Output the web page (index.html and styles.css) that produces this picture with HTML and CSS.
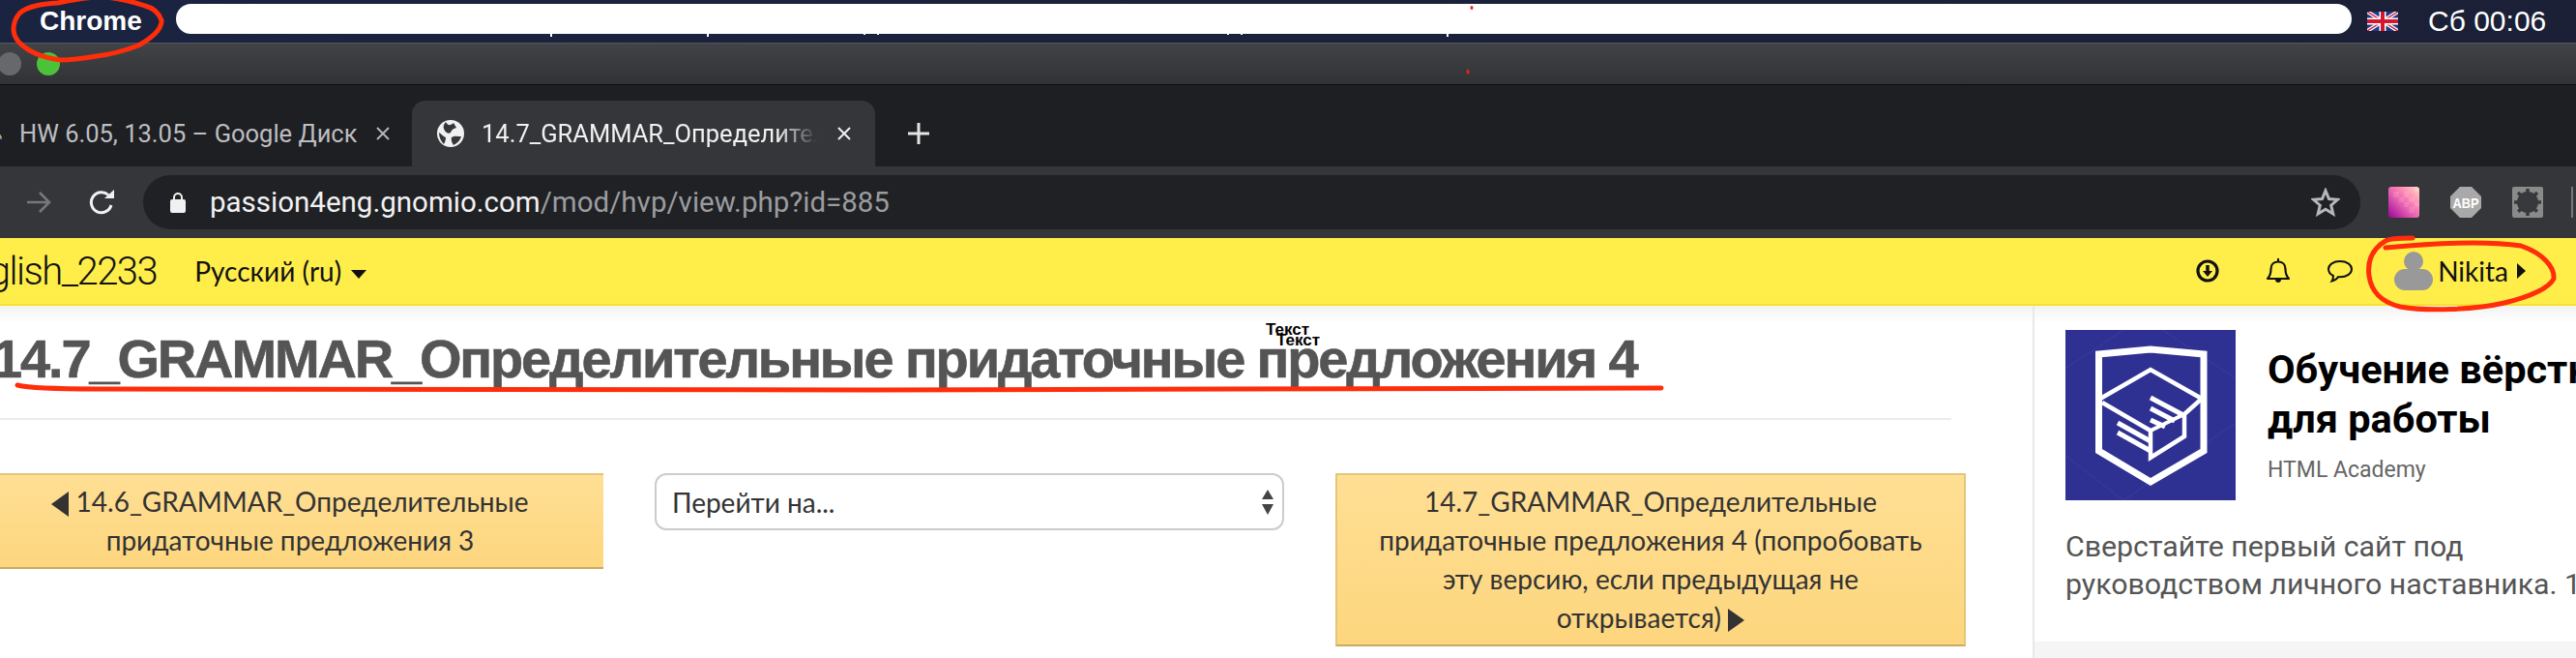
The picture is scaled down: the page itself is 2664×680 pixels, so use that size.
FILE: index.html
```html
<!DOCTYPE html>
<html lang="ru">
<head>
  <meta charset="UTF-8">
  <title>14.7_GRAMMAR_Определительные придаточные предложения 4</title>
  <link rel="stylesheet" href="styles.css">
</head>
<body>
  <div class="menubar">
    <span class="app-name">Chrome</span>
    <div class="menu-blank"></div>
    <svg class="flag" viewBox="0 0 32 20">
      <rect width="32" height="20" fill="#1f3a8c"/>
      <path d="M0 0L32 20M32 0L0 20" stroke="#fff" stroke-width="4"/>
      <path d="M0 0L32 20M32 0L0 20" stroke="#d3172e" stroke-width="1.4"/>
      <path d="M16 0V20M0 10H32" stroke="#fff" stroke-width="7"/>
      <path d="M16 0V20M0 10H32" stroke="#d3172e" stroke-width="4"/>
    </svg>
    <span class="clock">Сб 00:06</span>
  </div>

  <div class="titlebar">
    <span class="dot dot-grey"></span>
    <span class="dot dot-green"></span>
  </div>

  <div class="tabstrip">
    <div class="tab">
      <svg class="drive-icon" viewBox="0 0 12 12"><path d="M4 1L9 10H0z" fill="#f4b400"/><path d="M0 10H9V12H0z" fill="#4285f4"/></svg>
      <span class="tab-title">HW 6.05, 13.05 – Google Диск</span>
      <svg class="tab-close" viewBox="0 0 16 16"><path d="M2 2L14 14M14 2L2 14" stroke="#b4b5b8" stroke-width="2"/></svg>
    </div>
    <div class="tab tab-active">
      <svg class="globe" viewBox="0 0 28 28">
        <circle cx="14" cy="14" r="14" fill="#f1f1f2"/>
        <path d="M9 2C11 6 14 6 17 3L20 8C17 9 15 10 14 13C11 15 8 12 7 9C6 7 7 4 9 2z" fill="#35363a"/>
        <path d="M15 18C18 16 21 17 25 17C24 21 21 24 17 26C16 24 14 21 15 18z" fill="#35363a"/>
        <path d="M2 13C4 14 6 17 9 18C9 21 8 23 7 25C4 22 2 18 2 13z" fill="#35363a"/>
      </svg>
      <span class="tab-title tab-title-fade">14.7_GRAMMAR_Определительные придаточные</span>
      <svg class="tab-close" viewBox="0 0 16 16"><path d="M2 2L14 14M14 2L2 14" stroke="#f1f1f2" stroke-width="2"/></svg>
    </div>
    <svg class="new-tab" viewBox="0 0 24 24"><path d="M12 1V23M1 12H23" stroke="#e4e4e6" stroke-width="3"/></svg>
  </div>

  <div class="toolbar">
    <svg class="nav-arrow" viewBox="0 0 26 26"><path d="M1 13H24M14 3L24 13L14 23" fill="none" stroke="#77787b" stroke-width="2.6"/></svg>
    <svg class="reload" viewBox="0 0 28 28"><path d="M23 17A10.500 10.500 0 1 1 20 6.500" fill="none" stroke="#f1f1f2" stroke-width="3"/><path d="M16 10H26V1z" fill="#f1f1f2"/></svg>
    <div class="urlbar">
      <svg class="lock" viewBox="0 0 16 22"><path d="M4 9V6a4 4 0 0 1 8 0V9" fill="none" stroke="#f1f1f2" stroke-width="2"/><rect y="8" width="16" height="14" rx="2" fill="#f1f1f2"/></svg>
      <span class="url"><span class="url-host">passion4eng.gnomio.com</span>/mod/hvp/view.php?id=885</span>
      <svg class="star" viewBox="0 0 30 30"><path d="M15 3L18.500 11.500L27.500 12.300L20.700 18.200L22.800 27L15 22.300L7.200 27L9.300 18.200L2.500 12.300L11.500 11.500z" fill="none" stroke="#b6b7ba" stroke-width="3"/></svg>
    </div>
    <svg class="ext" viewBox="0 0 6 6" shape-rendering="crispEdges">
      <defs><linearGradient id="pink" x1="0" y1="1" x2="1" y2="0"><stop offset="0.05" stop-color="#a1109a"/><stop offset="0.4" stop-color="#e05ab0"/><stop offset="0.65" stop-color="#ff86b4"/><stop offset="1" stop-color="#ffd9c4"/></linearGradient></defs>
      <rect width="6" height="6" rx="0.4" fill="url(#pink)"/>
      <path d="M1 1h1v1h-1zM3 1h1v1h-1zM5 0h1v1h-1zM2 2h1v1h-1zM4 2h1v1h-1zM3 3h1v1h-1zM5 3h1v1h-1zM4 4h1v1h-1z" fill="#fff" fill-opacity="0.12"/>
    </svg>
    <svg class="ext" viewBox="0 0 32 32">
      <path d="M10 0H22L32 10V22L22 32H10L0 22V10z" fill="#a9a9a9"/>
      <text class="abp-text" x="16" y="21.500" text-anchor="middle" textLength="27" lengthAdjust="spacingAndGlyphs">ABP</text>
    </svg>
    <svg class="ext" viewBox="0 0 32 32">
      <rect width="32" height="32" rx="2" fill="#8a8a8b"/>
      <circle cx="16" cy="16" r="11" fill="#38393c"/>
      <path d="M16 2V30M2 16H30M6 6L26 26M26 6L6 26" stroke="#38393c" stroke-width="3.500" stroke-dasharray="4 20 4 20"/>
    </svg>
    <span class="toolbar-sep"></span>
  </div>

  <div class="sitebar">
    <span class="site-name">English_2233</span>
    <span class="lang">Русский (ru) <i class="caret-down"></i></span>
    <div class="sitebar-right">
      <svg class="site-icon download" viewBox="0 0 24 24"><circle cx="12" cy="12" r="10" fill="none" stroke="#111" stroke-width="3.200"/><path d="M12 6V14" stroke="#111" stroke-width="3.500"/><path d="M7 12H17L12 18z" fill="#111"/></svg>
      <svg class="site-icon bell" viewBox="0 0 26 28"><path d="M2 22C5 19 5.500 16 5.500 12C5.500 7 9 4.500 13 4.500C17 4.500 20.500 7 20.500 12C20.500 16 21 19 24 22z" fill="none" stroke="#111" stroke-width="2.200" stroke-linejoin="round"/><path d="M13 1V4" stroke="#111" stroke-width="2"/><path d="M10 23C10 27 16 27 16 23z" fill="#111"/></svg>
      <svg class="site-icon chat" viewBox="0 0 28 26"><path d="M14 3C7 3 2 6.500 2 11C2 14 4 16.500 7 18C7 20 6.500 22 5.500 23.500C8 23 10.500 21.500 12 19.200C12.700 19.300 13.300 19.300 14 19.300C21 19.300 26 15.500 26 11C26 6.500 21 3 14 3z" fill="none" stroke="#111" stroke-width="2"/></svg>
      <svg class="avatar" viewBox="0 0 40 40"><circle cx="20" cy="10" r="10" fill="#999"/><rect y="18" width="40" height="22" rx="11" fill="#999"/></svg>
      <span class="user-name">Nikita</span>
      <i class="caret-right"></i>
    </div>
  </div>

  <div class="page">
    <div class="main">
      <h1 class="page-title">14.7_GRAMMAR_Определительные придаточные предложения 4</h1>
      <div class="main-rule"></div>
      <div class="activity-nav">
        <a class="nav-btn nav-prev"><i class="arrow-left"></i> 14.6_GRAMMAR_Определительные придаточные предложения 3</a>
        <div class="jump">
          <span>Перейти на...</span>
          <svg class="jump-arrows" viewBox="0 0 14 28"><path d="M7 1L13 11H1zM1 16H13L7 27z" fill="#444"/></svg>
        </div>
        <a class="nav-btn nav-next">14.7_GRAMMAR_Определительные придаточные предложения 4 (попробовать эту версию, если предыдущая не открывается) <i class="arrow-right"></i></a>
      </div>
    </div>

    <aside class="side">
      <div class="ad">
        <div class="ad-head">
          <svg class="ad-logo" viewBox="0 0 176 176">
            <rect width="176" height="176" fill="#2e3192"/>
            <path d="M0 40L60 0M60 176L176 96M0 130L60 176M100 0L176 50" stroke="#3a3d9e" stroke-width="1" fill="none"/>
            <path d="M34.500 25L88 20L143 25V125L88 157L34.500 125z" fill="none" stroke="#fff" stroke-width="7"/>
            <path d="M36 71L88 41L141 71L123 87V110L88 132V104L38 75" fill="none" stroke="#fff" stroke-width="4.500"/>
            <path d="M88 104L123 87" fill="none" stroke="#fff" stroke-width="4"/>
            <path d="M88 70L122 88M88 81L113 94M88 93L103 100M54 96L88 115M54 106L88 125" fill="none" stroke="#fff" stroke-width="5"/>
          </svg>
          <div class="ad-text">
            <div class="ad-title">Обучение вёрстки<br>для работы</div>
            <div class="ad-org">HTML Academy</div>
          </div>
        </div>
        <p class="ad-desc">Сверстайте первый сайт под<br>руководством личного наставника. 1</p>
      </div>
      <div class="ad-foot"></div>
    </aside>
  </div>

  <!-- пометки поверх скриншота -->
  <span class="stray-text stray-one">Текст</span>
  <span class="stray-text stray-two">Текст</span>
  <svg class="marks" viewBox="0 0 2664 680">
    <path class="mark-tick" d="M570 34V38M732 34V38M894 34V36M908 34V36M1270 34V36M1284 34V36M1497 34V38"/>
    <path class="mark-line" d="M60 3C44 4 28 6 20 14C12 24 12 36 20 44C30 54 46 60 63 62C76 62 88 60 100 58C116 56 130 52 143 47C156 40 168 30 167 21C164 12 158 8 150 6C132 0 118 -3 104 -3C88 -3 74 0 60 3"/>
    <path class="mark-line" d="M18 398C30 401 60 402 100 402L900 403L1718 401"/>
    <path class="mark-line" d="M2495 246C2480 246 2470 247 2467 249C2452 258 2448 270 2450 285C2452 300 2462 312 2482 317C2510 322 2560 320 2590 313C2615 307 2636 298 2641 288C2642 276 2630 262 2607 254C2580 250 2530 250 2467 256"/>
    <ellipse class="mark-dot" cx="1522" cy="8" rx="1.500" ry="2"/>
    <ellipse class="mark-dot" cx="1518" cy="74" rx="1.500" ry="2.500"/>
  </svg>
</body>
</html>
```

FILE: styles.css
```css
html, body { margin: 0; padding: 0; }
body { position: relative; width: 2664px; height: 680px; overflow: hidden; background: #fff; font-family: 'Roboto', sans-serif; }

.menubar { height: 44px; display: flex; align-items: center; background: linear-gradient(to right, #1a2340, #1b2036); border-bottom: 1px solid #55565a; }
.app-name { width: 182px; flex: none; padding-left: 41px; box-sizing: border-box; color: #fff; font: bold 28px 'Liberation Sans', sans-serif; }
.menu-blank { width: 2250px; height: 31px; flex: none; background: #fff; border-radius: 16px; margin-top: -6px; }
.flag { width: 32px; height: 20px; flex: none; margin-left: 16px; }
.clock { margin-left: 31px; color: #fff; font: 30px 'Liberation Sans', sans-serif; white-space: nowrap; }

.titlebar { height: 42px; display: flex; align-items: center; gap: 16px; background: linear-gradient(#424346, #313235); border-bottom: 1px solid #0d0d0e; }
.dot { width: 24px; height: 24px; border-radius: 50%; }
.dot-grey { margin-left: -2px; background: #67686b; }
.dot-green { background: #4cc23b; }

.tabstrip { height: 68px; padding-top: 16px; display: flex; align-items: stretch; background: #1e1f22; }
.tab { display: flex; align-items: center; height: 68px; box-sizing: border-box; }
.tab:first-child { width: 426px; }
.drive-icon { width: 12px; height: 12px; flex: none; margin-left: -7px; margin-right: 15px; }
.tab-title { color: #bdbec1; font-size: 25.5px; white-space: nowrap; overflow: hidden; }
.tab-close { width: 16px; height: 16px; flex: none; margin-left: auto; margin-right: 22px; }
.tab-active { width: 479px; background: #35363a; border-radius: 14px 14px 0 0; padding-left: 26px; }
.globe { width: 28px; height: 28px; flex: none; margin-right: 18px; }
.tab-title-fade { width: 347px; flex: none; color: #f1f1f2; -webkit-mask-image: linear-gradient(to right, #000 88%, transparent); mask-image: linear-gradient(to right, #000 88%, transparent); }
.tab-active .tab-close { margin-right: 24px; }
.new-tab { width: 24px; height: 24px; margin: 22px 0 0 33px; }

.toolbar { height: 74px; display: flex; align-items: center; background: #35363a; }
.nav-arrow { width: 26px; height: 26px; flex: none; margin-left: 27px; }
.reload { width: 28px; height: 28px; flex: none; margin-left: 39px; }
.urlbar { width: 2293px; height: 56px; flex: none; margin-left: 28px; padding: 0 21px 0 28px; box-sizing: border-box; display: flex; align-items: center; background: #202124; border-radius: 28px; }
.lock { width: 16px; height: 22px; flex: none; }
.url { margin-left: 25px; color: #9b9c9f; font-size: 29.5px; white-space: nowrap; }
.url-host { color: #f1f1f2; }
.star { width: 30px; height: 30px; margin-left: auto; }
.ext { width: 32px; height: 32px; flex: none; margin-left: 32px; }
.urlbar + .ext { margin-left: 29px; border-radius: 3px; }
.abp-text { fill: #fff; font: bold 15px 'Liberation Sans', sans-serif; }
.toolbar-sep { width: 2px; height: 32px; flex: none; margin-left: 29px; background: #77787b; }

.sitebar { height: 68px; display: flex; align-items: center; background: #ffee4a; border-bottom: 2px solid #fbdf2a; color: #111; }
.site-name { margin-left: -53px; font: 300 40px 'Roboto', sans-serif; letter-spacing: -1.5px; white-space: nowrap; }
.lang { margin-left: 39px; font: 28px 'Lato', 'Noto Sans', sans-serif; white-space: nowrap; }
.caret-down { display: inline-block; margin-left: 3px; vertical-align: middle; border-left: 8px solid transparent; border-right: 8px solid transparent; border-top: 9px solid #111; }
.sitebar-right { margin-left: auto; display: flex; align-items: center; padding-right: 52px; }
.site-icon { flex: none; }
.download { width: 24px; height: 24px; }
.bell { width: 26px; height: 28px; margin-left: 48px; }
.chat { width: 28px; height: 26px; margin-left: 37px; }
.avatar { width: 40px; height: 40px; margin-left: 42px; }
.user-name { margin-left: 5px; font: 28px 'Lato', 'Noto Sans', sans-serif; }
.caret-right { margin-left: 9px; border-top: 8px solid transparent; border-bottom: 8px solid transparent; border-left: 9px solid #111; }

.page { display: flex; height: 364px; background: linear-gradient(#f3f3f3, #fff 18px); }
.main { width: 2102px; flex: none; overflow: hidden; }
.page-title { margin: 25px 0 0 -8px; height: 60px; color: #555; font: bold 56px/60px 'Liberation Sans', sans-serif; letter-spacing: -2.15px; -webkit-text-stroke: 0.6px #555; white-space: nowrap; }
.main-rule { width: 2018px; height: 2px; margin-top: 31px; background: #ececec; }
.activity-nav { display: flex; align-items: flex-start; gap: 53px; margin: 55px 0 0 -24px; }
.nav-btn { display: block; box-sizing: border-box; background: linear-gradient(#ffdf94, #fdd67e); border-top: 2px solid #e5c678; border-bottom: 2px solid #c9ab62; color: #333; font: 28px/40px 'Lato', 'Noto Sans', sans-serif; text-align: center; }
.nav-prev { width: 648px; flex: none; padding: 7px 40px 8px; }
.nav-next { width: 652px; flex: none; border-left: 2px solid #e5c678; border-right: 2px solid #e5c678; padding: 7px 30px 8px; }
.arrow-left { display: inline-block; border-top: 13px solid transparent; border-bottom: 13px solid transparent; border-right: 18px solid #333; vertical-align: -5px; }
.arrow-right { display: inline-block; border-top: 12px solid transparent; border-bottom: 12px solid transparent; border-left: 17px solid #333; vertical-align: -4px; }
.jump { width: 651px; height: 59px; flex: none; box-sizing: border-box; display: flex; align-items: center; justify-content: space-between; padding: 0 8px 0 16px; border: 2px solid #ccc; border-radius: 12px; color: #333; font: 28px 'Lato', 'Noto Sans', sans-serif; }
.jump-arrows { width: 14px; height: 28px; }

.side { flex: 1; border-left: 2px solid #e8e8e8; }
.ad { height: 347px; box-sizing: border-box; padding: 25px 0 0 32px; overflow: hidden; background: linear-gradient(#f3f3f3, #fff 18px); }
.ad-head { display: flex; width: 700px; }
.ad-logo { width: 176px; height: 176px; flex: none; }
.ad-text { margin-left: 33px; width: 480px; }
.ad-title { margin-top: 15px; color: #000; font: bold 41.5px/51px 'Roboto', sans-serif; white-space: nowrap; }
.ad-org { margin-top: 14px; color: #666; font-size: 23px; }
.ad-desc { width: 500px; margin: 28px 0 0; color: #555; font-size: 30.3px; line-height: 39px; white-space: nowrap; }
.ad-foot { height: 17px; background: #f5f5f5; }

.stray-text { position: absolute; color: #000; font: bold 17px/17px 'Liberation Sans Narrow', 'Liberation Sans', sans-serif; }
.stray-one { left: 1309px; top: 332px; }
.stray-two { left: 1320px; top: 343px; }
.marks { position: absolute; left: 0; top: 0; width: 2664px; height: 680px; pointer-events: none; }
.mark-line { fill: none; stroke: #ff2d0a; stroke-width: 5; stroke-linecap: round; }
.mark-tick { fill: none; stroke: #fff; stroke-width: 2; }
.mark-dot { fill: #e6261a; }
```
